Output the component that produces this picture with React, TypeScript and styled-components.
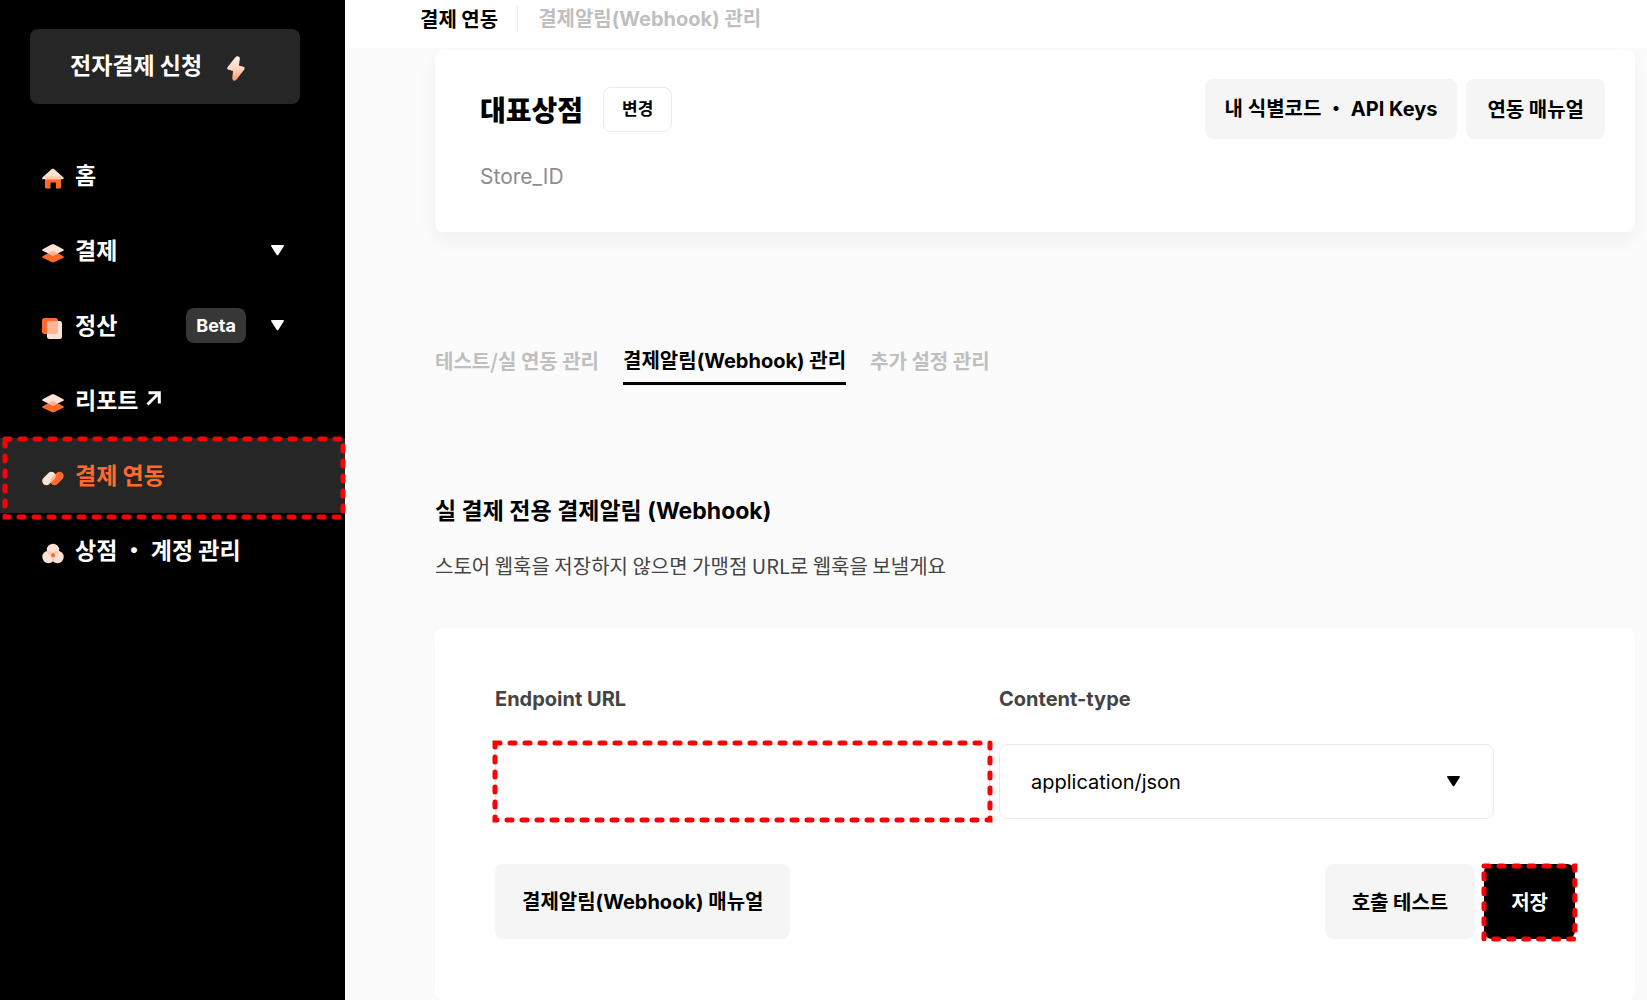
import React, { useState } from "react";
import styled, { createGlobalStyle, css } from "styled-components";

const koreanFont = '"Noto Sans CJK KR", sans-serif';
const mixedFont = 'Inter, "Noto Sans CJK KR", sans-serif';

const GlobalStyle = createGlobalStyle`
  *, *::before, *::after { box-sizing: border-box; }
  body {
    margin: 0;
    background: #fbfbfb;
    color: #000;
    font-family: ${mixedFont};
    font-size: 20px;
    line-height: 30px;
  }
  button, input, select { font: inherit; color: inherit; }
  button { cursor: pointer; }
  a { color: inherit; text-decoration: none; }
  h1, h2, p, ul { margin: 0; padding: 0; }
`;

const Page = styled.div`
  display: flex;
  min-height: 100vh;
`;

/* ---------- Highlight ---------- */

const HighlightHost = styled.div`
  position: relative;
`;

const HighlightFrame = styled.div<{ $inset: string }>`
  position: absolute;
  inset: ${(p) => p.$inset};
  pointer-events: none;

  svg {
    display: block;
    width: 100%;
    height: 100%;
    overflow: visible;
  }
`;

function Highlight({ inset }: { inset: string }) {
  return (
    <HighlightFrame $inset={inset} aria-hidden="true">
      <svg>
        <rect
          width="100%"
          height="100%"
          fill="none"
          stroke="#fb0007"
          strokeWidth="5"
          strokeLinecap="round"
          strokeDasharray="5 10"
        />
      </svg>
    </HighlightFrame>
  );
}

/* ---------- Sidebar ---------- */

const Sidebar = styled.aside`
  flex: 0 0 345px;
  background: #000;
  color: #fff;
  font-family: ${koreanFont};
  font-size: 23px;
  font-weight: 700;
`;

const ApplyButton = styled.button`
  display: flex;
  align-items: center;
  gap: 24px;
  width: 270px;
  height: 75px;
  margin: 29px 30px 34px;
  padding: 0 40px 6px;
  border: 0;
  border-radius: 8px;
  background: #262626;
  font-weight: 700;

  svg { margin-top: 10px; }
`;

const NavList = styled.ul`
  list-style: none;
`;

const NavLink = styled.a<{ $active?: boolean }>`
  display: flex;
  align-items: center;
  height: 75px;
  padding: 0 61px 0 42px;
  ${(p) =>
    p.$active &&
    css`
      background: #262626;
      color: #ff6b2c;
    `}
`;

const NavIcon = styled.svg`
  flex: none;
  width: 22px;
  height: 22px;
  margin: 6px 11px 0 0;
`;

const NavLabel = styled.span`
  display: flex;
  align-items: center;
  gap: 8px;
  flex: 1;
  padding-bottom: 4px;
  white-space: nowrap;
`;

const Badge = styled.span`
  margin-right: 25px;
  padding: 0 10px;
  border-radius: 8px;
  background: #373737;
  font-family: ${mixedFont};
  font-size: 18px;
  line-height: 35px;
`;

const Caret = () => (
  <svg width="13" height="11" viewBox="0 0 13 11" aria-hidden="true">
    <path d="M.8 0h11.4c.7 0 1 .6.6 1.2L7.4 9.8c-.4.7-1.4.7-1.8 0L.2 1.2C-.2.6.1 0 .8 0z" fill="currentColor" />
  </svg>
);

const Bolt = () => (
  <svg width="20" height="27" viewBox="0 0 20 27" aria-hidden="true">
    <defs>
      <linearGradient id="bolt" x1="0" y1="0" x2="0" y2="1">
        <stop offset="0" stopColor="#fff1ec" />
        <stop offset=".5" stopColor="#ffd5c2" />
        <stop offset="1" stopColor="#ff9a66" />
      </linearGradient>
    </defs>
    <path
      d="M9.4 2.2 1.5 12.3c-.7 1-.3 2.1.9 2.4l4.6 1.2-.7 7.3c-.1 2.3 2.5 3.3 4 1.5l8-10.3c.8-1.1.3-2.4-.9-2.7l-4.500-1.100 1-6.900c.3-2.300-2.900-3.500-4.500-1.500z"
      fill="url(#bolt)"
    />
  </svg>
);

const HomeIcon = () => (
  <NavIcon viewBox="0 0 22 22" aria-hidden="true">
    <path d="M3 9h16v10.500a1 1 0 0 1-1 1h-4v-5a1 1 0 0 0-1-1H9.500a1 1 0 0 0-1 1v5H4a1 1 0 0 1-1-1z" fill="#ff6a2b" />
    <path d="M9.800 1.100a1.700 1.700 0 0 1 2.200 0l9.200 8.200c.8.8.4 2-.8 2H1.400c-1.200 0-1.600-1.200-.8-2z" fill="#ffe1d5" />
    <path d="M3 8.300h16v3H3z" fill="#ffc0a3" opacity=".7" />
  </NavIcon>
);

const LayersIcon = () => (
  <NavIcon viewBox="0 0 22 22" aria-hidden="true">
    <path d="m9.500 8.600-8.800 4.600c-.8.500-.8 1.100 0 1.600l8.800 4.300c1 .5 2 .5 3 0l8.800-4.300c.8-.5.8-1.100 0-1.600l-8.800-4.600c-1-.5-2-.5-3 0z" fill="#ff6a2b" />
    <path d="m9.500 1.600-8.800 4.600c-.8.500-.8 1.100 0 1.600l8.800 4.300c1 .5 2 .5 3 0l8.800-4.300c.8-.5.8-1.100 0-1.600l-8.800-4.600c-1-.5-2-.5-3 0z" fill="#ffe1d5" />
    <path d="m9.500 8.600-3.500 1.800 3.500 1.700c1 .5 2 .5 3 0l3.500-1.700-3.500-1.800c-1-.5-2-.5-3 0z" fill="#ffb596" />
  </NavIcon>
);

const PagesIcon = () => (
  <NavIcon viewBox="0 0 22 22" aria-hidden="true">
    <rect x="0" y="0" width="16" height="16" rx="2.500" fill="#ff6a2b" />
    <rect x="5" y="3" width="15" height="18" rx="2.500" fill="#ffe1d5" />
    <path d="M7.500 3H16v10.500a2.500 2.500 0 0 1-2.500 2.500H5V5.500A2.500 2.500 0 0 1 7.500 3z" fill="#ffb596" />
  </NavIcon>
);

const LinkIcon = () => (
  <NavIcon viewBox="0 0 22 22" aria-hidden="true">
    <g strokeWidth="8.400" strokeLinecap="round">
      <path d="m12.500 13 5-5" stroke="#ff6a2b" />
      <path d="m4.400 13 5-5" stroke="#ffe1d5" />
    </g>
    <path d="M13.200 6.300c.9 2.300-.2 4.200-4.700 8.400-.9-2.300.2-4.200 4.700-8.400z" fill="#ffb596" />
  </NavIcon>
);

const CirclesIcon = () => (
  <NavIcon viewBox="0 0 22 22" aria-hidden="true">
    <g fill="#ffe1d5">
      <circle cx="11" cy="7" r="6.200" />
      <circle cx="6.500" cy="14" r="6.200" />
      <circle cx="15.500" cy="14" r="6.200" />
    </g>
    <path d="M5.200 8a6.200 6.200 0 0 1 5.800 1.800A6.200 6.200 0 0 1 16.800 8a6.200 6.200 0 0 1-4.300 5 6.200 6.200 0 0 1-1.500 5.200A6.200 6.200 0 0 1 9.500 13a6.200 6.200 0 0 1-4.300-5z" fill="#ffc9b1" />
    <path d="M11 9.800c1.300.8 1.900 1.800 2 3-.5 1-1.100 1.500-2 1.500s-1.500-.5-2-1.500c.1-1.200.7-2.200 2-3z" fill="#ff6a2b" />
  </NavIcon>
);

const ArrowIcon = () => (
  <svg width="15" height="15" viewBox="0 0 15 15" aria-hidden="true">
    <path d="M2.500 1.700h10.800v10.800M13 2 1.500 13.500" fill="none" stroke="currentColor" strokeWidth="3" />
  </svg>
);

/* ---------- Main ---------- */

const Main = styled.main`
  flex: 1;
  min-width: 0;
`;

const TopBar = styled.header`
  display: flex;
  align-items: center;
  height: 48px;
  padding: 0 75px 11px;
  background: #fff;
  font-weight: 700;
`;

const Crumb = styled.span<{ $muted?: boolean }>`
  color: ${(p) => (p.$muted ? "#bfbfbf" : "#000")};
  font-family: ${(p) => (p.$muted ? mixedFont : koreanFont)};

  & + & {
    margin-left: 19px;
    padding-left: 20px;
    border-left: 1px solid #ebebeb;
    line-height: 26px;
  }
`;

const Content = styled.div`
  padding: 2px 12px 0 90px;
`;

const StoreCard = styled.section`
  display: flex;
  justify-content: space-between;
  align-items: flex-start;
  padding: 29px 30px 40px 45px;
  border-radius: 8px;
  background: #fff;
  box-shadow: 0 8px 20px rgba(0, 0, 0, 0.05);
`;

const StoreTitle = styled.div`
  display: flex;
  align-items: center;
  gap: 20px;
  height: 60px;
`;

const Title = styled.h1`
  font-family: ${koreanFont};
  font-size: 28px;
  font-weight: 900;
  line-height: 42px;
`;

const StoreId = styled.p`
  margin-top: 23px;
  color: #8c8c8c;
  font-size: 21px;
`;

const ButtonRow = styled.div`
  display: flex;
  gap: 9px;
`;

const Button = styled.button<{
  $size?: "small" | "medium" | "large";
  $dark?: boolean;
  $mixed?: boolean;
}>`
  border: 0;
  border-radius: 8px;
  background: ${(p) => (p.$dark ? "#000" : "#f5f5f5")};
  color: ${(p) => (p.$dark ? "#fff" : "#000")};
  font-family: ${(p) => (p.$mixed ? mixedFont : koreanFont)};
  font-weight: 700;
  white-space: nowrap;
  ${(p) =>
    p.$size === "small"
      ? css`
          height: 45px;
          padding: 0 18px 2px;
          border: 1px solid #ebebeb;
          background: #fff;
          font-size: 17px;
        `
      : p.$size === "medium"
        ? css`
            height: 60px;
            padding: 0 ${p.$mixed ? 20 : 21}px;
          `
        : css`
            height: 75px;
            padding: 0 27px;
          `}
`;

const Tabs = styled.nav`
  display: flex;
  gap: 24px;
  margin-top: 114px;
  font-weight: 700;
`;

const Tab = styled.a<{ $active?: boolean }>`
  padding-bottom: 6px;
  border-bottom: 3px solid ${(p) => (p.$active ? "#000" : "transparent")};
  color: ${(p) => (p.$active ? "#000" : "#bfbfbf")};
  font-family: ${(p) => (p.$active ? mixedFont : koreanFont)};
`;

const SectionTitle = styled.h2`
  margin-top: 108px;
  font-size: 23px;
  font-weight: 700;
  line-height: 36px;
`;

const Description = styled.p`
  margin-top: 22px;
  color: #444;
  font-family: ${koreanFont};
`;

const Panel = styled.form`
  margin-top: 47px;
  padding: 56px 60px 61px;
  border-radius: 8px;
  background: #fff;
  box-shadow: 0 0 12px rgba(0, 0, 0, 0.02);
`;

const Fields = styled.div`
  display: grid;
  grid-template-columns: 1fr 1fr;
  gap: 9px;
  padding-right: 81px;
`;

const Label = styled.label`
  display: block;
  margin-bottom: 30px;
  color: #444;
  font-weight: 700;
`;

const fieldStyle = css`
  display: block;
  width: 100%;
  height: 75px;
  padding: 0 31px;
  border: 1px solid #ebebeb;
  border-radius: 8px;
  background: #fff;
  outline: none;
`;

const Input = styled.input`
  ${fieldStyle}
`;

const Select = styled.select`
  ${fieldStyle}
  appearance: none;
`;

const SelectBox = styled.div`
  position: relative;

  svg {
    position: absolute;
    top: 32px;
    right: 34px;
    pointer-events: none;
  }
`;

const Actions = styled.div`
  display: flex;
  justify-content: space-between;
  margin-top: 45px;
`;

export default function App() {
  const [url, setUrl] = useState("");

  return (
    <>
      <GlobalStyle />
      <Page>
        <Sidebar>
          <ApplyButton type="button">
            전자결제 신청
            <Bolt />
          </ApplyButton>
          <NavList>
            <li>
              <NavLink href="#home">
                <HomeIcon />
                <NavLabel>홈</NavLabel>
              </NavLink>
            </li>
            <li>
              <NavLink href="#payments">
                <LayersIcon />
                <NavLabel>결제</NavLabel>
                <Caret />
              </NavLink>
            </li>
            <li>
              <NavLink href="#settlement">
                <PagesIcon />
                <NavLabel>정산</NavLabel>
                <Badge>Beta</Badge>
                <Caret />
              </NavLink>
            </li>
            <li>
              <NavLink href="#report">
                <LayersIcon />
                <NavLabel>
                  리포트
                  <ArrowIcon />
                </NavLabel>
              </NavLink>
            </li>
            <HighlightHost as="li">
              <NavLink href="#integration" $active aria-current="page">
                <LinkIcon />
                <NavLabel>결제 연동</NavLabel>
              </NavLink>
              <Highlight inset="1px 2px -4px 5px" />
            </HighlightHost>
            <li>
              <NavLink href="#account">
                <CirclesIcon />
                <NavLabel>상점 ・ 계정 관리</NavLabel>
              </NavLink>
            </li>
          </NavList>
        </Sidebar>

        <Main>
          <TopBar>
            <Crumb>결제 연동</Crumb>
            <Crumb $muted>결제알림(Webhook) 관리</Crumb>
          </TopBar>
          <Content>
            <StoreCard>
              <div>
                <StoreTitle>
                  <Title>대표상점</Title>
                  <Button type="button" $size="small">변경</Button>
                </StoreTitle>
                <StoreId>Store_ID</StoreId>
              </div>
              <ButtonRow>
                <Button type="button" $size="medium" $mixed>내 식별코드 ・ API Keys</Button>
                <Button type="button" $size="medium">연동 매뉴얼</Button>
              </ButtonRow>
            </StoreCard>

            <Tabs>
              <Tab href="#mode">테스트/실 연동 관리</Tab>
              <Tab href="#webhook" $active>결제알림(Webhook) 관리</Tab>
              <Tab href="#extra">추가 설정 관리</Tab>
            </Tabs>

            <SectionTitle>실 결제 전용 결제알림 (Webhook)</SectionTitle>
            <Description>스토어 웹훅을 저장하지 않으면 가맹점 URL로 웹훅을 보낼게요</Description>

            <Panel onSubmit={(e) => e.preventDefault()}>
              <Fields>
                <div>
                  <Label htmlFor="endpoint">Endpoint URL</Label>
                  <HighlightHost>
                    <Input id="endpoint" value={url} onChange={(e) => setUrl(e.target.value)} />
                    <Highlight inset="-1px 0 -1px 0" />
                  </HighlightHost>
                </div>
                <div>
                  <Label htmlFor="content-type">Content-type</Label>
                  <SelectBox>
                    <Select id="content-type" defaultValue="json">
                      <option value="json">application/json</option>
                      <option value="form">application/x-www-form-urlencoded</option>
                    </Select>
                    <Caret />
                  </SelectBox>
                </div>
              </Fields>
              <Actions>
                <Button type="button" $mixed>결제알림(Webhook) 매뉴얼</Button>
                <ButtonRow>
                  <Button type="button">호출 테스트</Button>
                  <HighlightHost>
                    <Button type="submit" $dark>저장</Button>
                    <Highlight inset="2px 0 0 0" />
                  </HighlightHost>
                </ButtonRow>
              </Actions>
            </Panel>
          </Content>
        </Main>
      </Page>
    </>
  );
}
